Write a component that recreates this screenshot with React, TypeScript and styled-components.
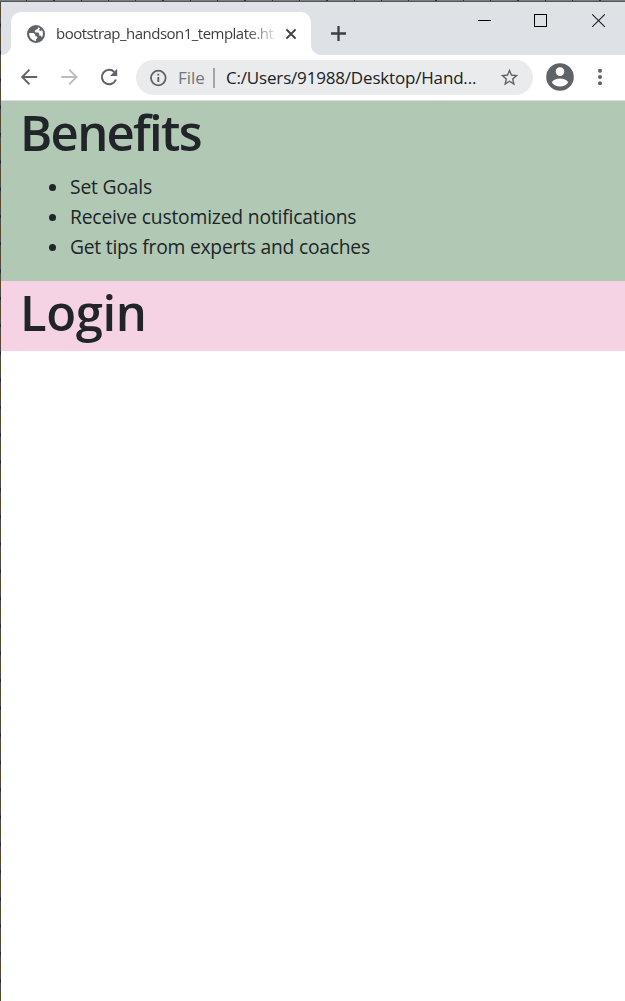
import React from "react";
import styled, { createGlobalStyle } from "styled-components";

const GlobalStyle = createGlobalStyle`
  * { box-sizing: border-box; }
  html, body { margin: 0; padding: 0; background: #fff; overflow: hidden; }
  body { font-family: "Open Sans", "Noto Sans", sans-serif; }
`;

const Desktop = styled.div`
  display: grid;
  grid-template-columns: 1px 1fr;
  grid-template-rows: 1px 1fr;
  width: 625px;
  height: 1001px;
`;
const TopEdge = styled.div`
  grid-column: 1 / 3;
  background: repeating-linear-gradient(90deg, #7c7c7c 0 26px, #303030 26px 27.3px);
`;
const LeftEdge = styled.div`
  background: repeating-linear-gradient(180deg, #4b4b4b 0 4px, #5c4820 9px 13px, #4b4b4b 18px 22px, #1e1e1e 24px, #4b4b4b 27.3px);
`;
const Window = styled.div`
  display: flex;
  flex-direction: column;
  min-width: 0;
  background: #fff;
  border-top: 1px solid #56585a;
`;

const TabStrip = styled.div`
  display: flex;
  height: 53px;
  background: #dee1e6;
`;
const Flare = styled.div<{ $side: "left" | "right" }>`
  width: 10px;
  height: 10px;
  align-self: flex-end;
  background: radial-gradient(circle at ${(p) => (p.$side === "left" ? "0 0" : "100% 0")}, #dee1e6 9.5px, #fff 10.5px);
`;
const Tab = styled.div`
  display: flex;
  align-items: center;
  width: 300px;
  height: 43px;
  margin-top: 10px;
  padding: 0 12px 0 16px;
  background: #fff;
  border-radius: 10px 10px 0 0;
`;
const TabTitle = styled.div`
  width: 219px;
  margin: 0 10px 2px 11px;
  white-space: nowrap;
  color: #3c4043;
  font-size: 15px;
  line-height: 22px;
  letter-spacing: -0.52px;
  mask-image: linear-gradient(90deg, #000 190px, transparent 224px);
`;
const NewTab = styled.div`
  display: flex;
  margin: 24px 0 0 10px;
`;
const WindowControls = styled.div`
  display: flex;
  margin: 11px 20px 0 auto;

  & > :nth-child(2) { margin: 0 44px 0 43px; }
`;

const Toolbar = styled.div`
  display: flex;
  align-items: center;
  height: 46px;
  padding: 0 15px 0 17px;
  border-bottom: 1px solid #dcdee0;
`;
const NavButtons = styled.div`
  display: flex;
  gap: 20px;
  margin: 0 18px 1px 0;
`;
const AddressBar = styled.div`
  display: flex;
  align-items: center;
  width: 397px;
  height: 35px;
  padding: 0 13px;
  border-radius: 18px;
  background: #e9ebed;
`;
const Scheme = styled.span`
  width: 35px;
  margin: 0 0 1px 11px;
  color: #70757a;
  font-size: 17px;
`;
const Separator = styled.span`
  width: 2px;
  height: 20px;
  margin-right: 11px;
  background: #a3a5a8;
`;
const Url = styled.span`
  flex: 1;
  margin-bottom: 1px;
  color: #202124;
  font-size: 17px;
  letter-spacing: -0.18px;
  white-space: nowrap;
`;
const Actions = styled.div`
  display: flex;
  align-items: center;
  gap: 16px;
  margin: 0 0 1px 13px;
`;

const Section = styled.section<{ $color: string; $height: number }>`
  height: ${(p) => p.$height}px;
  padding: 1px 19px 0;
  background: ${(p) => p.$color};
  color: #212529;
`;
const Heading = styled.h1<{ $tracking: number }>`
  margin: 0;
  font-size: 49px;
  font-weight: 600;
  line-height: 60px;
  letter-spacing: ${(p) => p.$tracking}px;
`;
const List = styled.ul`
  margin: 9px 0 0 1px;
  padding: 0;
  list-style: none;
`;
const Item = styled.li<{ $tracking: number }>`
  display: flex;
  align-items: center;
  height: 30px;
  padding-left: 28px;
  font-size: 19.3px;
  letter-spacing: ${(p) => p.$tracking}px;
  white-space: nowrap;

  &::before {
    content: "";
    width: 7px;
    height: 7px;
    margin: 2px 14px 0 0;
    border-radius: 50%;
    background: #212529;
  }
`;

const Icon = styled.svg`
  display: block;
  flex: none;
`;

const Globe = () => (
  <Icon width="18" height="18" viewBox="0 0 18 18">
    <circle cx="9" cy="9" r="9" fill="#5f6368" />
    <path d="M11 2.2 10.7 4 8.6 4.8 7.6 6.3 8.4 7.4H11.2L12.4 9.3 11.6 10.5H13.4L14.9 12.3C16.2 10.3 16.3 7.6 15.2 5.4H13.8L12.9 6.3 12.2 4.6 13 3.3ZM2.2 8.1H6.6L8.3 9.8V11.2H9.9L10.5 12.9 9 14.2V15.9C5.2 15.9 1.8 12.5 2.2 8.1Z" fill="#fff" />
  </Icon>
);
const Close = () => (
  <Icon width="12" height="12" viewBox="0 0 12 12">
    <path d="M1.4 1.4 10.6 10.6M10.6 1.4 1.4 10.6" stroke="#3c4043" strokeWidth="2" />
  </Icon>
);
const Plus = () => (
  <Icon width="15" height="15" viewBox="0 0 15 15">
    <path d="M7.5 0V15M0 7.5H15" stroke="#3c4043" strokeWidth="2.3" />
  </Icon>
);
const Arrow = ({ forward = false }: { forward?: boolean }) => (
  <Icon width="20" height="20" viewBox="0 0 20 20">
    <path
      d={forward ? "M3.3 10H18.5M11.2 2.7 18.5 10 11.2 17.3" : "M19.2 10H4.2M11.5 2.7 4.2 10 11.5 17.3"}
      stroke={forward ? "#babcbe" : "#5f6368"}
      strokeWidth="1.9"
      fill="none"
    />
  </Icon>
);
const Reload = () => (
  <Icon width="20" height="20" viewBox="0 0 20 20">
    <path d="M17.9 12.5A7.2 7.2 0 1 1 16.3 5" stroke="#5f6368" strokeWidth="2" fill="none" />
    <path d="M19.2 1.8V9H12Z" fill="#5f6368" />
  </Icon>
);
const Info = () => (
  <Icon width="18" height="18" viewBox="0 0 18 18">
    <circle cx="9.3" cy="9" r="7.3" stroke="#5f6368" strokeWidth="1.8" fill="none" />
    <path d="M9.3 8V13M9.3 4.8V6.6" stroke="#5f6368" strokeWidth="1.9" />
  </Icon>
);
const Star = () => (
  <Icon width="21" height="21" viewBox="0 0 24 24">
    <path
      d="M22 9.24 14.81 8.62 12 2 9.19 8.63 2 9.24l5.46 4.73L5.82 21 12 17.27 18.18 21l-1.63-7.03zM12 15.4l-3.76 2.27 1-4.28-3.32-2.88 4.38-.38L12 6.1l1.71 4.04 4.38.38-3.32 2.88 1 4.28z"
      fill="#5f6368"
    />
  </Icon>
);
const Avatar = () => (
  <Icon width="28" height="28" viewBox="0 0 28 28">
    <circle cx="14" cy="14" r="13.8" fill="#5f6368" />
    <circle cx="14" cy="8.6" r="4.3" fill="#fff" />
    <path d="M5.8 19.2C7.2 16.8 10.6 15.6 14 15.6S20.8 16.8 22.2 19.2C20.3 22.1 17.5 23.6 14 23.6S7.7 22.1 5.8 19.2Z" fill="#fff" />
  </Icon>
);
const Menu = () => (
  <Icon width="20" height="20" viewBox="0 0 20 20" fill="#5f6368">
    <circle cx="10" cy="3.7" r="2" />
    <circle cx="10" cy="10" r="2" />
    <circle cx="10" cy="16.3" r="2" />
  </Icon>
);
const Minimize = () => (
  <Icon width="13" height="17" viewBox="0 0 13 17">
    <path d="M0 7.5H13" stroke="#000" />
  </Icon>
);
const Maximize = () => (
  <Icon width="13" height="17" viewBox="0 0 13 17">
    <rect x=".5" y="1.5" width="12" height="12" fill="none" stroke="#000" />
  </Icon>
);
const CloseWindow = () => (
  <Icon width="14" height="17" viewBox="0 0 14 17">
    <path d="M1.2 1.3 13.8 13.9M13.8 1.3 1.2 13.9" stroke="#222" strokeWidth="1.1" />
  </Icon>
);

const benefits = [
  { text: "Set Goals", tracking: -0.18 },
  { text: "Receive customized notifications", tracking: -0.18 },
  { text: "Get tips from experts and coaches", tracking: -0.24 },
];

export default function App() {
  return (
    <Desktop>
      <GlobalStyle />
      <TopEdge />
      <LeftEdge />
      <Window>
        <TabStrip>
          <Flare $side="left" />
          <Tab>
            <Globe />
            <TabTitle>bootstrap_handson1_template.ht</TabTitle>
            <Close />
          </Tab>
          <Flare $side="right" />
          <NewTab>
            <Plus />
          </NewTab>
          <WindowControls>
            <Minimize />
            <Maximize />
            <CloseWindow />
          </WindowControls>
        </TabStrip>
        <Toolbar>
          <NavButtons>
            <Arrow />
            <Arrow forward />
            <Reload />
          </NavButtons>
          <AddressBar>
            <Info />
            <Scheme>File</Scheme>
            <Separator />
            <Url>C:/Users/91988/Desktop/Hand...</Url>
            <Star />
          </AddressBar>
          <Actions>
            <Avatar />
            <Menu />
          </Actions>
        </Toolbar>
        <Section $color="#b0c8b4" $height={180}>
          <Heading $tracking={-1.7}>Benefits</Heading>
          <List>
            {benefits.map((b) => (
              <Item key={b.text} $tracking={b.tracking}>{b.text}</Item>
            ))}
          </List>
        </Section>
        <Section $color="#f5d3e4" $height={70}>
          <Heading $tracking={-0.4}>Login</Heading>
        </Section>
      </Window>
    </Desktop>
  );
}
